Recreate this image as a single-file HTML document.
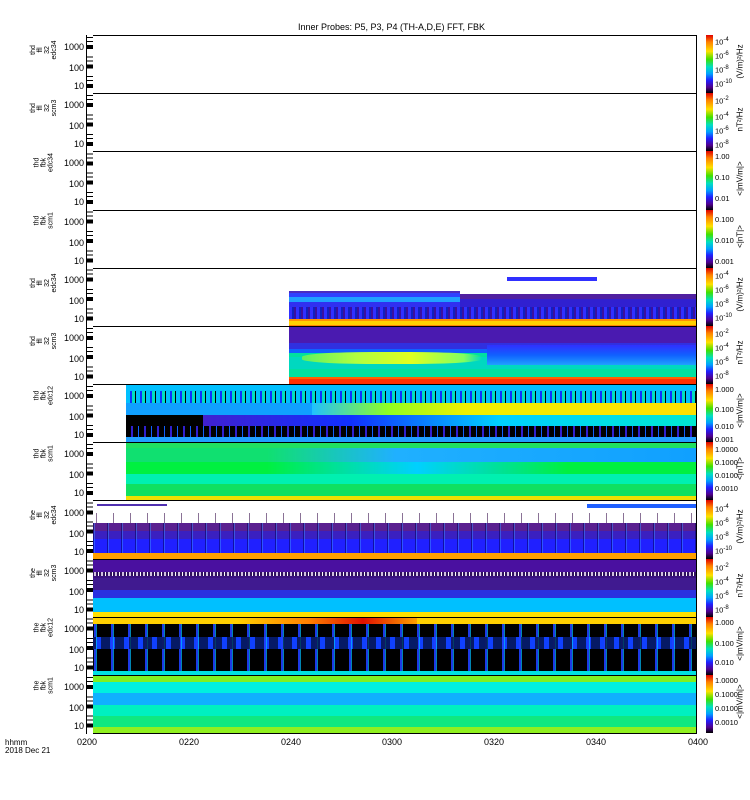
<!DOCTYPE html>
<html><head><meta charset="utf-8"><style>
body{margin:0;background:#fff;width:750px;height:800px;position:relative;overflow:hidden;font-family:"Liberation Sans",sans-serif;color:#000}
.a{position:absolute}
.pn{position:absolute;left:86px;width:611px;border:1px solid #000;box-sizing:border-box;overflow:hidden;background:#fff}
.d{position:absolute;top:0;bottom:0;right:0}
.tl{position:absolute;right:666px;font-size:9px;line-height:10px;text-align:right}
.lab{position:absolute;font-size:7px;line-height:7px;transform:rotate(-90deg);transform-origin:center;text-align:center;width:60px;left:14px}
.cb{position:absolute;left:706px;width:7px;background:linear-gradient(#e00000,#ff8000 12%,#ffe000 28%,#40e000 42%,#00e0c0 55%,#00a0ff 67%,#2020ff 78%,#500090 90%,#000)}
.cl{position:absolute;left:715px;font-size:7.5px;line-height:8px}
.cl sup{font-size:6px}
.cu{position:absolute;font-size:8px;transform:rotate(-90deg);white-space:nowrap;width:60px;text-align:center;left:710px}
.xl{position:absolute;top:737px;font-size:9px}
</style></head><body>
<div class="a" style="top:22px;left:0;width:783px;text-align:center;font-size:9px">Inner Probes: P5, P3, P4 (TH-A,D,E) FFT, FBK</div>

<div class="pn" style="top:35px;height:59px"></div>
<div class="pn" style="top:93px;height:59px"></div>
<div class="pn" style="top:151px;height:60px"></div>
<div class="pn" style="top:210px;height:59px"></div>

<div class="pn" style="top:268px;height:59px">
 <div class="d" style="left:202px;background:linear-gradient(#fff 0 22px,#4a2ac0 22px 24px,#2f40ff 24px 28px,#20a0ff 28px 33px,#3030f0 33px 38px,#2030f0 38px 50px,#ff9000 50px 52px,#ffd000 52px 56px,#ff8000 56px)"></div>
 <div class="d" style="left:373px;top:0;height:38px;background:linear-gradient(#fff 0 25px,#5020a0 25px 30px,#fff 30px 38px)"></div>
 <div class="d" style="left:373px;top:30px;height:20px;background:#3020d0"></div>
 <div class="d" style="left:202px;top:38px;height:12px;background:repeating-linear-gradient(90deg,#3030ff 0 3px,#1020c0 3px 5px,#3a10a0 5px 7px)"></div>
 <div class="a" style="left:420px;top:8px;width:90px;height:4px;background:#3030ff"></div>
</div>

<div class="pn" style="top:326px;height:59px">
 <div class="d" style="left:202px;background:linear-gradient(#4a1ab0 0 16px,#3030e0 16px 22px,#1060ff 22px 26px,#00e0a0 26px 30px,#00d8c0 30px 42px,#00e0a0 42px 50px,#ff6000 50px 52px,#ff3000 52px)"></div>
 <div class="a" style="left:215px;top:25px;width:180px;height:12px;background:linear-gradient(90deg,#60f060,#b0ff40 30%,#e0ff20 60%,#80ff60 90%,transparent);border-radius:40%"></div>
 <div class="d" style="left:400px;top:18px;height:20px;background:linear-gradient(#3030ff,#1060ff 50%,#20a0ff)"></div>
</div>

<div class="pn" style="top:384px;height:59px">
 <div class="d" style="left:39px;background:linear-gradient(#00c0ff 0 6px,#20a0ff 6px 18px,#10a0ff 18px 30px,#000 30px 41px,#000 41px 52px,#20a0ff 52px)"></div>
 <div class="a" style="left:39px;top:6px;right:0;height:12px;background:repeating-linear-gradient(90deg,#00c0ff 0 4px,#1030ff 4px 6px,#00e0c0 6px 9px,#000 9px 10px)"></div>
 <div class="a" style="left:225px;top:18px;right:0;height:12px;background:linear-gradient(90deg,#20c0ff,#90ff20 20%,#f0f000 40%,#ffe000)"></div>
 <div class="a" style="left:116px;top:30px;right:0;height:11px;background:linear-gradient(90deg,#4020d0,#1030ff 30%,#00d0ff 60%,#00e8d0)"></div>
 <div class="a" style="left:39px;top:41px;right:0;height:11px;background:repeating-linear-gradient(90deg,#000 0 5px,#3020d0 5px 7px,#000 7px 12px,#1060ff 12px 13px)"></div>
</div>

<div class="pn" style="top:442px;height:59px">
 <div class="d" style="left:39px;background:linear-gradient(#20e060 0 5px,#10e070 5px 19px,#00f040 19px 31px,#00f0b0 31px 41px,#10e060 41px 53px,#f0e000 53px)"></div>
 <div class="a" style="left:180px;top:5px;right:0;height:14px;background:linear-gradient(90deg,transparent,#20b0ff 30%,#10a0ff)"></div>
 <div class="a" style="left:180px;top:19px;right:0;height:12px;background:linear-gradient(90deg,transparent,#00d0ff 35%,#00f040 70%)"></div>
</div>

<div class="pn" style="top:500px;height:60px">
 <div class="d" style="left:0;background:linear-gradient(#fff 0 22px,#5a2090 22px 30px,#3a20c0 30px 38px,#2020ff 38px 52px,#ffa000 52px)"></div>
 <div class="a" style="left:0;top:22px;right:0;height:30px;background:repeating-linear-gradient(90deg,rgba(0,0,0,0) 0 6px,rgba(0,0,80,.5) 6px 7px,rgba(60,140,255,.5) 7px 8px,rgba(0,0,0,0) 8px 14px)"></div>
 <div class="a" style="left:0;top:12px;right:0;height:10px;background:repeating-linear-gradient(90deg,rgba(0,0,0,0) 0 9px,rgba(60,20,80,.6) 9px 10px,rgba(0,0,0,0) 10px 17px)"></div>
 <div class="a" style="left:10px;top:3px;width:70px;height:2px;background:#5030b0"></div>
 <div class="a" style="left:500px;top:3px;right:0;height:4px;background:#2060ff"></div>
</div>

<div class="pn" style="top:559px;height:59px">
 <div class="d" style="left:0;background:linear-gradient(#4a10a0 0 12px,#3a1080 12px 18px,#401a90 18px 30px,#2a30e0 30px 38px,#00c0ff 38px 52px,#ffe000 52px)"></div>
 <div class="a" style="left:0;top:12px;right:0;height:4px;background:repeating-linear-gradient(90deg,#d0c0e0 0 2px,#301060 2px 4px,#fff 4px 5px,#301060 5px 7px)"></div>
</div>

<div class="pn" style="top:617px;height:59px">
 <div class="d" style="left:0;background:linear-gradient(#ffd000 0 6px,#000 6px 19px,#1040ff 19px 31px,#000 31px 42px,#000 42px 53px,#00e0e0 53px)"></div>
 <div class="a" style="left:150px;top:0;width:180px;height:6px;background:linear-gradient(90deg,#ffd000,#ff8000 40%,#e01000 70%,#ffa000)"></div>
 <div class="a" style="left:0;top:6px;right:0;height:47px;background:repeating-linear-gradient(90deg,rgba(0,0,0,0) 0 7px,rgba(32,64,255,.9) 7px 9px,rgba(0,190,255,.7) 9px 10px,rgba(0,0,0,0) 10px 17px)"></div>
 <div class="a" style="left:0;top:19px;right:0;height:12px;background:repeating-linear-gradient(90deg,rgba(0,0,0,.6) 0 9px,rgba(0,0,0,0) 9px 14px)"></div>
</div>

<div class="pn" style="top:675px;height:59px">
 <div class="d" style="left:0;background:linear-gradient(#80f020 0 6px,#00f0e0 6px 17px,#10b0ff 17px 29px,#00f0c0 29px 40px,#10e880 40px 51px,#90f020 51px)"></div>
</div>

<div class="tl" style="top:42px">1000</div><div class="tl" style="top:63px">100</div><div class="tl" style="top:81px">10</div>
<div class="tl" style="top:100px">1000</div><div class="tl" style="top:121px">100</div><div class="tl" style="top:139px">10</div>
<div class="tl" style="top:158px">1000</div><div class="tl" style="top:179px">100</div><div class="tl" style="top:197px">10</div>
<div class="tl" style="top:217px">1000</div><div class="tl" style="top:238px">100</div><div class="tl" style="top:256px">10</div>
<div class="tl" style="top:275px">1000</div><div class="tl" style="top:296px">100</div><div class="tl" style="top:314px">10</div>
<div class="tl" style="top:333px">1000</div><div class="tl" style="top:354px">100</div><div class="tl" style="top:372px">10</div>
<div class="tl" style="top:391px">1000</div><div class="tl" style="top:412px">100</div><div class="tl" style="top:430px">10</div>
<div class="tl" style="top:449px">1000</div><div class="tl" style="top:470px">100</div><div class="tl" style="top:488px">10</div>
<div class="tl" style="top:508px">1000</div><div class="tl" style="top:529px">100</div><div class="tl" style="top:547px">10</div>
<div class="tl" style="top:566px">1000</div><div class="tl" style="top:587px">100</div><div class="tl" style="top:605px">10</div>
<div class="tl" style="top:624px">1000</div><div class="tl" style="top:645px">100</div><div class="tl" style="top:663px">10</div>
<div class="tl" style="top:682px">1000</div><div class="tl" style="top:703px">100</div><div class="tl" style="top:721px">10</div>

<div class="a" style="left:87px;top:35px;width:6px;height:699px;background:repeating-linear-gradient(#fff 0 2px,#000 2px 3px,#fff 3px 6px,#000 6px 7px,#fff 7px 10px,#000 10px 14px,#fff 14px 19.39px)"></div>

<div class="lab" style="top:36px">thd<br>ffl<br>32<br>edc34</div>
<div class="lab" style="top:94px">thd<br>ffl<br>32<br>scm3</div>
<div class="lab" style="top:152px">thd<br>fbk<br>edc34</div>
<div class="lab" style="top:210px">thd<br>fbk<br>scm1</div>
<div class="lab" style="top:269px">thd<br>ffl<br>32<br>edc34</div>
<div class="lab" style="top:327px">thd<br>ffl<br>32<br>scm3</div>
<div class="lab" style="top:385px">thd<br>fbk<br>edc12</div>
<div class="lab" style="top:443px">thd<br>fbk<br>scm1</div>
<div class="lab" style="top:501px">the<br>ffl<br>32<br>edc34</div>
<div class="lab" style="top:559px">the<br>ffl<br>32<br>scm3</div>
<div class="lab" style="top:617px">the<br>fbk<br>edc12</div>
<div class="lab" style="top:675px">the<br>fbk<br>scm1</div>

<div class="cb" style="top:35px;height:58px"></div><div class="cb" style="top:93px;height:58px"></div>
<div class="cb" style="top:151px;height:59px"></div><div class="cb" style="top:210px;height:58px"></div>
<div class="cb" style="top:268px;height:58px"></div><div class="cb" style="top:326px;height:58px"></div>
<div class="cb" style="top:384px;height:58px"></div><div class="cb" style="top:442px;height:58px"></div>
<div class="cb" style="top:500px;height:59px"></div><div class="cb" style="top:559px;height:58px"></div>
<div class="cb" style="top:617px;height:58px"></div><div class="cb" style="top:675px;height:58px"></div>

<div class="cl" style="top:36px">10<sup>-4</sup></div><div class="cl" style="top:50px">10<sup>-6</sup></div><div class="cl" style="top:64px">10<sup>-8</sup></div><div class="cl" style="top:78px">10<sup>-10</sup></div>
<div class="cl" style="top:95px">10<sup>-2</sup></div><div class="cl" style="top:111px">10<sup>-4</sup></div><div class="cl" style="top:125px">10<sup>-6</sup></div><div class="cl" style="top:139px">10<sup>-8</sup></div>
<div class="cl" style="top:153px">1.00</div><div class="cl" style="top:174px">0.10</div><div class="cl" style="top:195px">0.01</div>
<div class="cl" style="top:216px">0.100</div><div class="cl" style="top:237px">0.010</div><div class="cl" style="top:258px">0.001</div>
<div class="cl" style="top:270px">10<sup>-4</sup></div><div class="cl" style="top:284px">10<sup>-6</sup></div><div class="cl" style="top:298px">10<sup>-8</sup></div><div class="cl" style="top:312px">10<sup>-10</sup></div>
<div class="cl" style="top:328px">10<sup>-2</sup></div><div class="cl" style="top:342px">10<sup>-4</sup></div><div class="cl" style="top:356px">10<sup>-6</sup></div><div class="cl" style="top:370px">10<sup>-8</sup></div>
<div class="cl" style="top:386px">1.000</div><div class="cl" style="top:406px">0.100</div><div class="cl" style="top:423px">0.010</div><div class="cl" style="top:436px">0.001</div>
<div class="cl" style="top:446px">1.0000</div><div class="cl" style="top:459px">0.1000</div><div class="cl" style="top:472px">0.0100</div><div class="cl" style="top:485px">0.0010</div>
<div class="cl" style="top:503px">10<sup>-4</sup></div><div class="cl" style="top:517px">10<sup>-6</sup></div><div class="cl" style="top:531px">10<sup>-8</sup></div><div class="cl" style="top:545px">10<sup>-10</sup></div>
<div class="cl" style="top:562px">10<sup>-2</sup></div><div class="cl" style="top:576px">10<sup>-4</sup></div><div class="cl" style="top:590px">10<sup>-6</sup></div><div class="cl" style="top:604px">10<sup>-8</sup></div>
<div class="cl" style="top:619px">1.000</div><div class="cl" style="top:640px">0.100</div><div class="cl" style="top:659px">0.010</div>
<div class="cl" style="top:677px">1.0000</div><div class="cl" style="top:691px">0.1000</div><div class="cl" style="top:705px">0.0100</div><div class="cl" style="top:719px">0.0010</div>

<div class="cu" style="top:57px">(V/m)²/Hz</div><div class="cu" style="top:115px">nT²/Hz</div>
<div class="cu" style="top:174px">&lt;|mV/m|&gt;</div><div class="cu" style="top:232px">&lt;|nT|&gt;</div>
<div class="cu" style="top:290px">(V/m)²/Hz</div><div class="cu" style="top:348px">nT²/Hz</div>
<div class="cu" style="top:406px">&lt;|mV/m|&gt;</div><div class="cu" style="top:464px">&lt;|nT|&gt;</div>
<div class="cu" style="top:522px">(V/m)²/Hz</div><div class="cu" style="top:581px">nT²/Hz</div>
<div class="cu" style="top:639px">&lt;|mV/m|&gt;</div><div class="cu" style="top:697px">&lt;|mV/m|&gt;</div>

<div class="xl" style="left:77px">0200</div><div class="xl" style="left:179px">0220</div><div class="xl" style="left:281px">0240</div>
<div class="xl" style="left:382px">0300</div><div class="xl" style="left:484px">0320</div><div class="xl" style="left:586px">0340</div><div class="xl" style="left:688px">0400</div>
<div class="a" style="left:5px;top:739px;font-size:8px;line-height:8px">hhmm<br>2018 Dec 21</div>
</body></html>
